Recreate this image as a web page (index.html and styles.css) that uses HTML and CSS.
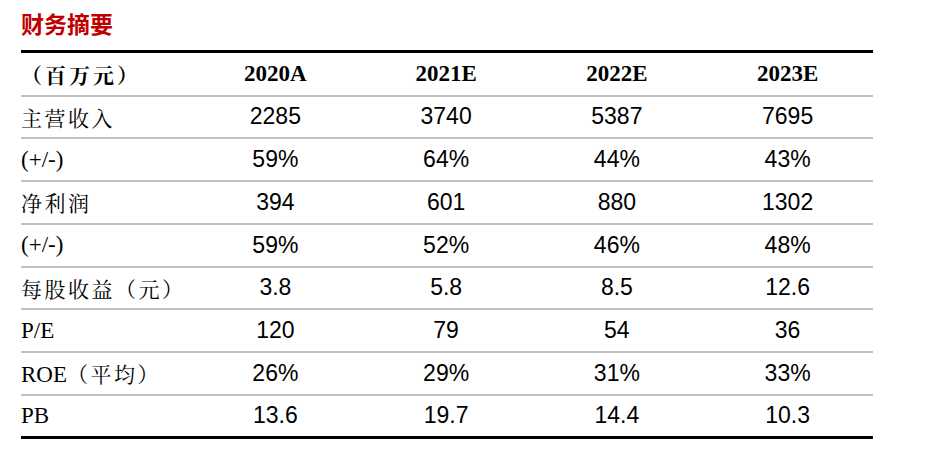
FILE: index.html
```html
<!DOCTYPE html>
<html lang="zh">
<head>
<meta charset="utf-8">
<link rel="stylesheet" href="styles.css">
</head>
<body>
<div class="page">
  <h1 class="title">财务摘要</h1>
  <table class="fin">
    <thead>
      <tr>
        <th class="label">（百万元）</th>
        <th>2020A</th>
        <th>2021E</th>
        <th>2022E</th>
        <th>2023E</th>
      </tr>
    </thead>
    <tbody>
      <tr><td class="label cjk">主营收入</td><td>2285</td><td>3740</td><td>5387</td><td>7695</td></tr>
      <tr><td class="label">(+/-)</td><td>59%</td><td>64%</td><td>44%</td><td>43%</td></tr>
      <tr><td class="label cjk">净利润</td><td>394</td><td>601</td><td>880</td><td>1302</td></tr>
      <tr><td class="label">(+/-)</td><td>59%</td><td>52%</td><td>46%</td><td>48%</td></tr>
      <tr><td class="label cjk">每股收益（元）</td><td>3.8</td><td>5.8</td><td>8.5</td><td>12.6</td></tr>
      <tr><td class="label">P/E</td><td>120</td><td>79</td><td>54</td><td>36</td></tr>
      <tr><td class="label">ROE<span class="cjk">（平均）</span></td><td>26%</td><td>29%</td><td>31%</td><td>33%</td></tr>
      <tr class="last"><td class="label">PB</td><td>13.6</td><td>19.7</td><td>14.4</td><td>10.3</td></tr>
    </tbody>
  </table>
</div>
</body>
</html>
```

FILE: styles.css
```css
html, body {
  margin: 0;
  padding: 0;
  background: #ffffff;
}

.page {
  padding: 8px 0 0 21px;
  width: 852px;
}

.title {
  margin: 0;
  height: 42px;
  font-family: "Noto Sans CJK SC", sans-serif;
  font-size: 23px;
  line-height: 30px;
  font-weight: 700;
  color: #c00000;
}

.fin {
  width: 852px;
  border-collapse: collapse;
  table-layout: fixed;
  border-top: 3px solid #000000;
}

.fin th,
.fin td {
  padding: 0;
  text-align: center;
  vertical-align: middle;
  color: #000000;
}

.fin th:first-child,
.fin td:first-child {
  width: 169px;
  text-align: left;
}

.fin thead tr {
  height: 44px;
  border-bottom: 2px solid #c0c0c0;
}

.fin th {
  font-family: "Liberation Serif", "Noto Sans CJK SC", serif;
  font-size: 23px;
  font-weight: 700;
}

.fin th.label {
  font-family: "Noto Serif CJK SC", "Noto Sans CJK SC", serif;
  font-size: 21px;
  letter-spacing: 3px;
}

.fin tbody tr {
  height: 42.75px;
  border-bottom: 2px solid #c0c0c0;
}

.fin tbody tr.last {
  border-bottom: 3px solid #000000;
}

.fin td {
  font-family: "Liberation Sans", Arial, sans-serif;
  font-size: 23px;
}

.fin td.label {
  font-family: "Liberation Serif", "Noto Sans CJK SC", serif;
  font-size: 23px;
}

.cjk {
  font-family: "Noto Serif CJK SC", "Noto Sans CJK SC", serif !important;
  font-size: 21px !important;
  letter-spacing: 2.5px;
}
```
